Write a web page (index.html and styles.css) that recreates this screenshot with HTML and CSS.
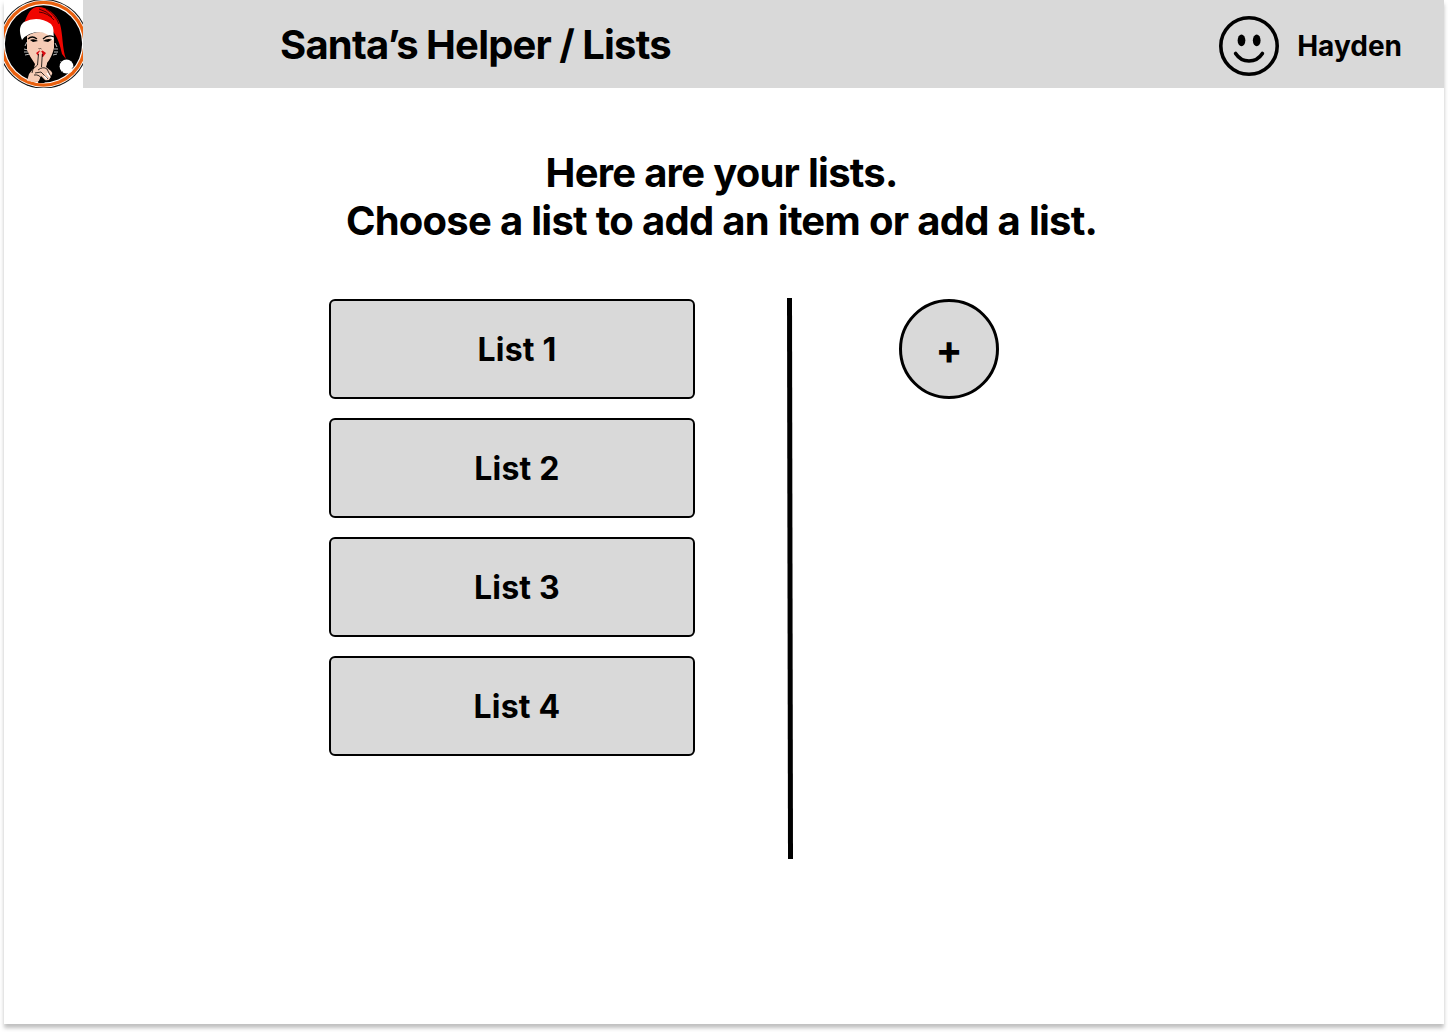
FILE: index.html
```html
<!DOCTYPE html>
<html lang="en">
<head>
<meta charset="utf-8">
<title>Santa’s Helper / Lists</title>
<link rel="stylesheet" href="styles.css">
</head>
<body>
<div class="page">
  <header class="topbar">
    <svg class="logo" viewBox="0 0 79 88" aria-hidden="true">
      <rect width="79" height="88" fill="#fff"/>
      <circle cx="39.500" cy="43.800" r="44.800" fill="#111"/>
      <circle cx="39.500" cy="43.800" r="43.800" fill="#fff"/>
      <circle cx="39.500" cy="43.800" r="43" fill="#e9600f"/>
      <circle cx="39.500" cy="43.800" r="39.700" fill="#fff"/>
      <circle cx="39.500" cy="43.800" r="38.600" fill="#000"/>
      <path d="M20 24C23 15 26 9 31 7.500C40 5 52 13 56 24C59 34 58 48 62 59L58 54C56 45 54 37 47 29Z" fill="#f00500"/>
      <path d="M35 9Q43 11 48 17M35 12Q44 13 50 20M42 9Q51 14 55 24" fill="none" stroke="#200" stroke-width=".8"/>
      <path d="M20 49l4 1m-4 2l4 0m-3 3l5-1m24-5l4 0m-4 3l4 0m-5 3l4-1M23 42l-2 4M51 43l2 4" stroke="#bbb" stroke-width="1"/>
      <path d="M23 36Q36 28 50 36L50 48Q48 57 43 63L43 66L50 70L45 80L27 82L30 68L31 64Q26 57 23 50Z" fill="#f5cbb5"/>
      <path d="M18 40Q13 27 20 22Q34 15 47 24Q51 28 49 41Q45 33 36 32Q24 32 18 40Z" fill="#fff"/>
      <path d="M24 39Q28 35 33 39M39 39Q44 34 50 37" fill="none" stroke="#000" stroke-width="1.200"/>
      <path d="M26 40Q30 38 34 41L29 42ZM39 41Q43 38 48 39.500L44 42Z" fill="#000"/>
      <path d="M34.500 48l1 1 1-.5 1 .5" fill="none" stroke="#000" stroke-width=".6"/>
      <path d="M32 53L35.500 50.500L37 51.500L38.500 50.500L42 53L39 57H35Z" fill="#d70b12"/>
      <path d="M43 64Q48 61 50 57L61 72L52 79L47 71L42 67Z" fill="#000"/>
      <path d="M23 81L25 74L29 69L33 66L34.500 53Q36.500 49 38.200 53L37.500 67L43 68L47 77L44 80L39 76L36 77L34 82Z" fill="#f5cbb5"/>
      <path d="M34.500 54L33.500 65L29 69L28 73M38.300 54L37.500 67M34 70Q39 66 43 69L47 77M31 73L37 72L44 79M30 75Q36 74 38 80" fill="none" stroke="#000" stroke-width=".8"/>
      <path d="M34 83L37 76L42 81L40 83Z" fill="#000"/>
      <path d="M40 76l3 3M43 73l3 4" stroke="#fff" stroke-width="1.300"/>
      <circle cx="62.500" cy="66.500" r="6.900" fill="#fff"/>
      <path d="M57 61l-1 1m-1 4l1 1m2 4l1 1m8-11l1 1m1 5l-1 2" stroke="#777" stroke-width=".8"/>
    </svg>
    <h1 class="title">Santa’s Helper / Lists</h1>
    <div class="user">
      <svg class="smiley" viewBox="0 0 60 60" aria-hidden="true">
        <circle cx="30" cy="30" r="28.200" fill="none" stroke="#000" stroke-width="3.600"/>
        <ellipse cx="22.500" cy="24.400" rx="3.850" ry="5.800"/>
        <ellipse cx="37.700" cy="24.400" rx="3.850" ry="5.800"/>
        <path d="M16.600 37.500Q21.500 45 30 45T43.400 37.500" fill="none" stroke="#000" stroke-width="3.600" stroke-linecap="round"/>
      </svg>
      <span class="name">Hayden</span>
    </div>
  </header>
  <main>
    <h2 class="intro">Here are your lists.<br>Choose a list to add an item or add a list.</h2>
    <div class="content">
      <nav class="lists">
        <a class="list">List 1</a>
        <a class="list">List 2</a>
        <a class="list">List 3</a>
        <a class="list">List 4</a>
      </nav>
      <svg class="divider" viewBox="0 0 6 561" aria-hidden="true"><path d="M0 0H5L6 561H1Z"/></svg>
      <a class="add">+</a>
    </div>
  </main>
</div>
</body>
</html>
```
FILE: styles.css
```css
* { box-sizing: border-box; }
body {
  margin: 0;
  min-height: 1032px;
  background: #fff;
  color: #000;
  font-family: Inter, sans-serif;
}
.page {
  width: 1440px;
  height: 1024px;
  margin: 0 4px;
  background: #fff;
  box-shadow: 0 4px 4px rgba(0, 0, 0, .25);
}
.topbar {
  display: flex;
  height: 88px;
  background: #d9d9d9;
}
.logo { width: 79px; height: 88px; }
.title {
  margin: 21px 0 0 197px;
  font-size: 40px;
  line-height: 48px;
  font-weight: 700;
  letter-spacing: -.02em;
  word-spacing: -.5px;
}
.user {
  display: flex;
  align-items: center;
  gap: 18px;
  height: 60px;
  margin: 16px 42px 0 auto;
}
.smiley { width: 60px; height: 60px; }
.name {
  font-size: 28px;
  line-height: 34px;
  font-weight: 700;
}
.intro {
  margin: 61px 5px 0 0;
  font-size: 40px;
  line-height: 48px;
  font-weight: 700;
  letter-spacing: -.02em;
  word-spacing: .33px;
  text-align: center;
}
.content {
  display: flex;
  align-items: flex-start;
  margin: 53px 0 0 325px;
}
.lists {
  display: flex;
  flex-direction: column;
  gap: 19px;
  width: 366px;
  padding-top: 1px;
}
.list {
  height: 100px;
  padding-left: 10px;
  border: 2px solid #000;
  border-radius: 6px;
  background: #d9d9d9;
  font-size: 32px;
  line-height: 98px;
  font-weight: 700;
  letter-spacing: .2px;
  text-align: center;
}
.divider { width: 6px; height: 561px; margin-left: 92px; }
.add {
  width: 100px;
  height: 100px;
  margin: 1px 0 0 106px;
  border: 3px solid #000;
  border-radius: 50%;
  background: #d9d9d9;
  font-size: 40px;
  line-height: 96px;
  font-weight: 700;
  text-align: center;
}
```
